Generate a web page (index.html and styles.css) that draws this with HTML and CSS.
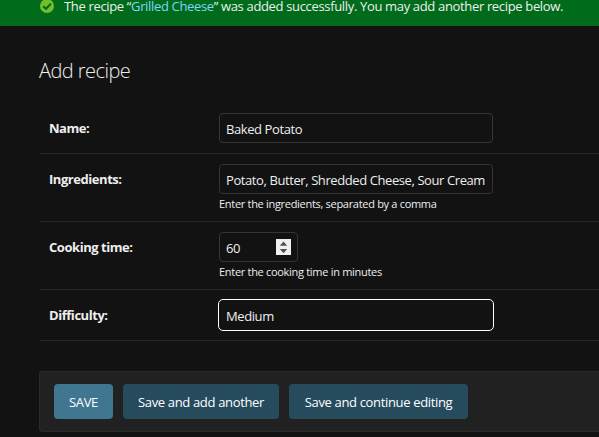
FILE: index.html
```html
<!DOCTYPE html>
<html lang="en">
<head>
<meta charset="utf-8">
<title>Add recipe</title>
<link rel="stylesheet" href="styles.css">
</head>
<body>
<div class="message">
  <svg class="message-icon" width="14" height="14" viewBox="0 0 14 14"><circle cx="7" cy="7" r="7" fill="#70bf2b"/><path d="M3.2 7.2 6 9.8 10.8 4.7" fill="none" stroke="#006b1b" stroke-width="2"/></svg>
  <p class="message-text">The recipe “<a class="message-link">Grilled Cheese</a>” was added successfully. You may add another recipe below.</p>
</div>
<main class="content">
  <h1 class="title">Add recipe</h1>
  <form>
    <div class="row">
      <label class="label" for="name">Name:</label>
      <div><input class="field" id="name" type="text" value="Baked Potato"></div>
    </div>
    <div class="row">
      <label class="label" for="ingredients">Ingredients:</label>
      <div>
        <input class="field" id="ingredients" type="text" value="Potato, Butter, Shredded Cheese, Sour Cream">
        <div class="help">Enter the ingredients, separated by a comma</div>
      </div>
    </div>
    <div class="row">
      <label class="label" for="time">Cooking time:</label>
      <div>
        <div class="field number">
          <input class="number-value" id="time" type="text" value="60">
          <svg class="spinner" width="15" height="16" viewBox="0 0 15 16"><path fill="#f0f0f0" d="M0 0h15v16H0z"/><path fill="#505050" d="M7.5 2.6 11.2 6.8H3.8zM7.5 14.2 11.2 10H3.8z"/></svg>
        </div>
        <div class="help">Enter the cooking time in minutes</div>
      </div>
    </div>
    <div class="row">
      <label class="label" for="difficulty">Difficulty:</label>
      <div><input class="field active" id="difficulty" type="text" value="Medium"></div>
    </div>
    <div class="submit-row">
      <button class="button primary" type="button">SAVE</button>
      <button class="button another" type="button">Save and add another</button>
      <button class="button continue" type="button">Save and continue editing</button>
    </div>
  </form>
</main>
</body>
</html>
```
FILE: styles.css
```css
* { box-sizing: border-box; }
html { background: #121212; overflow: hidden; }
body {
  margin: 0;
  height: 437px;
  overflow: hidden;
  color: #eee;
  font: 13px/18px "Open Sans", "Noto Sans", sans-serif;
  letter-spacing: -0.34px;
}
.message {
  display: flex;
  align-items: flex-start;
  gap: 10px;
  height: 26px;
  padding-left: 40px;
  background: #006b1b;
}
.message-icon { flex: none; margin-top: -1px; }
.message-text { margin: 0; line-height: 12px; white-space: nowrap; }
.message-link { color: #81d4fa; }
.content { padding: 33px 0 0 39px; }
.title {
  margin: 0 0 20px;
  font-size: 20px;
  line-height: 24px;
  font-weight: 300;
  letter-spacing: -0.55px;
  color: #eee;
}
.row {
  display: grid;
  grid-template-columns: 170px 274px;
  align-items: start;
  padding: 10px 0 10px 10px;
  border-bottom: 1px solid #252525;
}
.label { padding-top: 6px; font-weight: 700; letter-spacing: -0.45px; }
.field {
  display: block;
  width: 274px;
  height: 30px;
  padding: 2px 6px 0;
  border: 1px solid #353535;
  border-radius: 4px;
  background: #121212;
  color: #eee;
  font: inherit;
  letter-spacing: -0.41px;
}
.active { border-color: #121212; outline: 1px solid #fff; }
.number {
  display: flex;
  align-items: center;
  justify-content: space-between;
  width: 79px;
  padding: 0 6px;
}
.number-value {
  width: 40px;
  height: 28px;
  padding: 2px 0 0;
  border: 0;
  background: transparent;
  color: inherit;
  font: inherit;
  letter-spacing: inherit;
}
.help { height: 17px; padding-top: 2px; font-size: 11px; line-height: 16px; letter-spacing: -0.3px; color: #eee; white-space: nowrap; }
.submit-row {
  display: flex;
  gap: 10px;
  height: 61px;
  margin-top: 30px;
  padding: 12px 14px;
  border: 1px solid #2a2a2a;
  border-right: 0;
  border-radius: 4px 0 0 4px;
  background: #212121;
}
.button {
  height: 35px;
  padding: 1px 0 0;
  border: 0;
  border-radius: 4px;
  background: #264b5d;
  color: #fff;
  font: inherit;
  letter-spacing: inherit;
  white-space: nowrap;
}
.primary { width: 59px; background: #417690; }
.another { width: 156px; }
.continue { width: 179px; }
```
